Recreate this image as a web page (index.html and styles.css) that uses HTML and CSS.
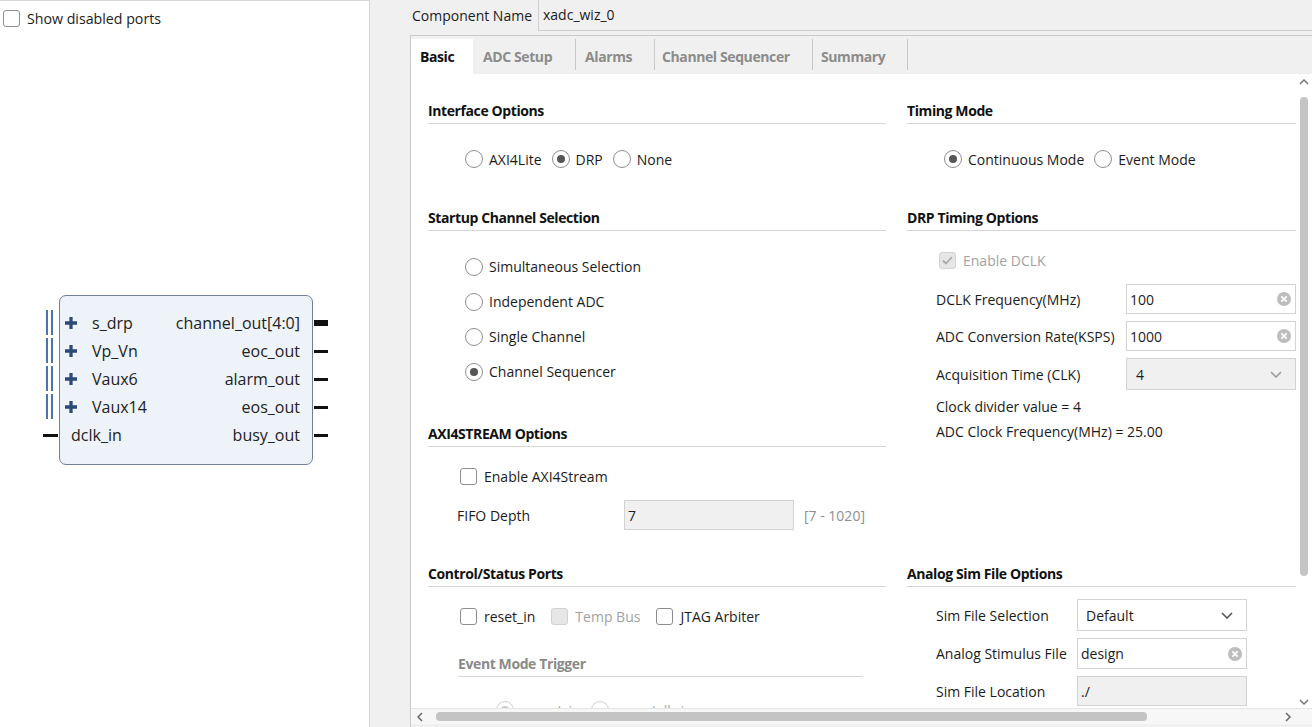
FILE: index.html
```html
<!DOCTYPE html>
<html>
<head>
<meta charset="utf-8">
<title>XADC Wizard</title>
<link rel="stylesheet" href="styles.css">
</head>
<body>
<div class="app">
  <aside class="left">
    <div class="top-cb"><span class="cb"></span><span>Show disabled ports</span></div>
    <div class="block">
      <div class="port"><span class="pin-l bus"></span><span class="pl"><svg class="plus" width="11" height="11" viewBox="0 0 11 11"><path d="M5.5 0v11M0 5.5h11" stroke="#2d4a78" stroke-width="3"/></svg>s_drp</span><span class="pr">channel_out[4:0]</span><span class="pin-r thick"></span></div>
      <div class="port"><span class="pin-l bus"></span><span class="pl"><svg class="plus" width="11" height="11" viewBox="0 0 11 11"><path d="M5.5 0v11M0 5.5h11" stroke="#2d4a78" stroke-width="3"/></svg>Vp_Vn</span><span class="pr">eoc_out</span><span class="pin-r"></span></div>
      <div class="port"><span class="pin-l bus"></span><span class="pl"><svg class="plus" width="11" height="11" viewBox="0 0 11 11"><path d="M5.5 0v11M0 5.5h11" stroke="#2d4a78" stroke-width="3"/></svg>Vaux6</span><span class="pr">alarm_out</span><span class="pin-r"></span></div>
      <div class="port"><span class="pin-l bus"></span><span class="pl"><svg class="plus" width="11" height="11" viewBox="0 0 11 11"><path d="M5.5 0v11M0 5.5h11" stroke="#2d4a78" stroke-width="3"/></svg>Vaux14</span><span class="pr">eos_out</span><span class="pin-r"></span></div>
      <div class="port"><span class="pin-l wire"></span><span class="pl plain">dclk_in</span><span class="pr">busy_out</span><span class="pin-r"></span></div>
    </div>
  </aside>

  <main class="right">
    <div class="cname">
      <span class="cname-l">Component Name</span>
      <div class="cname-in">xadc_wiz_0</div>
    </div>

    <div class="tabpanel">
      <div class="tabs">
        <div class="tab active w-basic">Basic</div>
        <div class="tab sep w-adc">ADC Setup</div>
        <div class="tab sep w-alarms">Alarms</div>
        <div class="tab sep w-chseq">Channel Sequencer</div>
        <div class="tab sep w-summary">Summary</div>
      </div>

      <div class="tbody">
        <div class="viewport">
          <div class="cols">
            <div class="col col-l">
              <div class="sh">Interface Options</div>
              <div class="radios row-first">
                <span class="opt"><span class="rd"></span>AXI4Lite</span>
                <span class="opt"><span class="rd on"></span>DRP</span>
                <span class="opt"><span class="rd"></span>None</span>
              </div>

              <div class="sh sec-gap1">Startup Channel Selection</div>
              <div class="rlist">
                <span class="opt"><span class="rd"></span>Simultaneous Selection</span>
                <span class="opt"><span class="rd"></span>Independent ADC</span>
                <span class="opt"><span class="rd"></span>Single Channel</span>
                <span class="opt"><span class="rd on"></span>Channel Sequencer</span>
              </div>

              <div class="sh sec-gap2">AXI4STREAM Options</div>
              <div class="cbrow cb-first">
                <span class="opt cbopt"><span class="cb"></span>Enable AXI4Stream</span>
              </div>
              <div class="fifo">
                <span class="fifo-l">FIFO Depth</span>
                <div class="field dis fifo-in">7</div>
                <span class="range">[7 - 1020]</span>
              </div>

              <div class="sh sec-gap3">Control/Status Ports</div>
              <div class="cbrow cb-first">
                <span class="opt cbopt"><span class="cb"></span>reset_in</span>
                <span class="opt cbopt disabled"><span class="cb dcb"></span>Temp Bus</span>
                <span class="opt cbopt"><span class="cb"></span>JTAG Arbiter</span>
              </div>
              <div class="sh sub-sh">Event Mode Trigger</div>
              <div class="radios ev-radios disabled">
                <span class="opt"><span class="rd drd on"></span>convst_in</span>
                <span class="opt"><span class="rd drd"></span>convstclk_in</span>
              </div>
            </div>

            <div class="col col-r">
              <div class="sh">Timing Mode</div>
              <div class="radios row-first">
                <span class="opt"><span class="rd on"></span>Continuous Mode</span>
                <span class="opt"><span class="rd"></span>Event Mode</span>
              </div>

              <div class="sh sec-gap1">DRP Timing Options</div>
              <div class="cbrow cb-first">
                <span class="opt cbopt disabled"><span class="cb dcb"><svg width="13" height="11" viewBox="0 0 13 11"><path d="M2 5.5l3 3 6-6.5" fill="none" stroke="#a9a9a9" stroke-width="1.8"/></svg></span>Enable DCLK</span>
              </div>
              <div class="frow drp fr-first">
                <span class="lbl">DCLK Frequency(MHz)</span>
                <div class="field">100<svg class="clr" width="14" height="14" viewBox="0 0 14 14"><circle cx="7" cy="7" r="7" fill="#bdbdbd"/><path d="M4.3 4.3l5.4 5.4M9.7 4.3l-5.4 5.4" stroke="#fff" stroke-width="1.8"/></svg></div>
              </div>
              <div class="frow drp fr-next">
                <span class="lbl">ADC Conversion Rate(KSPS)</span>
                <div class="field">1000<svg class="clr" width="14" height="14" viewBox="0 0 14 14"><circle cx="7" cy="7" r="7" fill="#bdbdbd"/><path d="M4.3 4.3l5.4 5.4M9.7 4.3l-5.4 5.4" stroke="#fff" stroke-width="1.8"/></svg></div>
              </div>
              <div class="frow drp fr-next">
                <span class="lbl">Acquisition Time (CLK)</span>
                <div class="field sel dis acq">4<svg class="chev" width="12" height="7" viewBox="0 0 12 7"><path d="M1 1l5 5 5-5" fill="none" stroke="#9a9a9a" stroke-width="1.6"/></svg></div>
              </div>
              <div class="info info-first">Clock divider value = 4</div>
              <div class="info info-next">ADC Clock Frequency(MHz) = 25.00</div>

              <div class="sh sec-gap4">Analog Sim File Options</div>
              <div class="frow sim sim-first">
                <span class="lbl">Sim File Selection</span>
                <div class="field sel simsel">Default<svg class="chev" width="12" height="7" viewBox="0 0 12 7"><path d="M1 1l5 5 5-5" fill="none" stroke="#555" stroke-width="1.6"/></svg></div>
              </div>
              <div class="frow sim fr-next">
                <span class="lbl">Analog Stimulus File</span>
                <div class="field stim">design<svg class="clr" width="14" height="14" viewBox="0 0 14 14"><circle cx="7" cy="7" r="7" fill="#bdbdbd"/><path d="M4.3 4.3l5.4 5.4M9.7 4.3l-5.4 5.4" stroke="#fff" stroke-width="1.8"/></svg></div>
              </div>
              <div class="frow sim fr-next">
                <span class="lbl">Sim File Location</span>
                <div class="field dis loc">./</div>
              </div>
            </div>
          </div>
        </div>

        <div class="vscroll">
          <svg width="10" height="6" viewBox="0 0 10 6"><path d="M1 5l4-4 4 4" fill="none" stroke="#777" stroke-width="1.5"/></svg>
          <div class="vthumb"></div>
          <svg class="vdown" width="10" height="6" viewBox="0 0 10 6"><path d="M1 1l4 4 4-4" fill="none" stroke="#777" stroke-width="1.5"/></svg>
        </div>
        <div class="hscroll">
          <svg width="6" height="10" viewBox="0 0 6 10"><path d="M5 1L1 5l4 4" fill="none" stroke="#666" stroke-width="1.5"/></svg>
          <div class="hthumb"></div>
          <svg class="hright" width="6" height="10" viewBox="0 0 6 10"><path d="M1 1l4 4-4 4" fill="none" stroke="#666" stroke-width="1.5"/></svg>
        </div>
        <div class="corner"></div>
      </div>
    </div>
  </main>
</div>
</body>
</html>
```

FILE: styles.css
```css
* { box-sizing: border-box; margin: 0; padding: 0; }
html, body { width: 1312px; height: 727px; overflow: hidden; }
body {
  font-family: "Open Sans", "Noto Sans", sans-serif;
  font-size: 14px;
  color: #1b1b1b;
  background: #f0f0f0;
}
.app { display: flex; height: 727px; }

/* ---------- left panel ---------- */
.left {
  width: 370px;
  flex: none;
  background: #fff;
  border-top: 1px solid #d8d8d8;
  border-right: 1px solid #d8d8d8;
}
.top-cb {
  display: flex;
  align-items: center;
  gap: 7px;
  height: 18px;
  margin: 8px 0 0 3px;
  font-size: 14.2px;
}
.cb {
  width: 17px;
  height: 17px;
  flex: none;
  border: 1px solid #8d8d8d;
  border-radius: 3px;
  background: #fff;
  display: flex;
  align-items: center;
  justify-content: center;
}
.cb.dcb { border-color: #d2d2d2; background: #e6e6e6; }

.block {
  width: 254px;
  height: 170px;
  margin: 268px 0 0 59px;
  padding-top: 13px;
  border: 1px solid #6f7f96;
  border-radius: 7px;
  background: #eef3f9;
  font-size: 16px;
  color: #222;
}
.port {
  position: relative;
  height: 28px;
  display: flex;
  align-items: center;
  justify-content: space-between;
}
.pl { display: flex; align-items: center; gap: 15px; padding-left: 5px; }
.plus { width: 12px; height: 12px; }
.pl.plain { padding-left: 11px; }
.pr { padding-right: 12px; }
.pin-l, .pin-r { position: absolute; }
.pin-l.bus {
  left: -14px;
  top: 1px;
  width: 7px;
  height: 25px;
  border-left: 2.5px solid #4a76ab;
  border-right: 2.5px solid #4a76ab;
}
.pin-l.wire { left: -17px; top: 13px; width: 15px; height: 3px; background: #111; }
.pin-r { right: -16px; top: 13px; width: 14px; height: 3px; background: #111; }
.pin-r.thick { top: 11px; height: 6px; }

/* ---------- right side ---------- */
.right { flex: 1; display: flex; flex-direction: column; min-width: 0; }
.cname { display: flex; height: 31px; }
.cname-l { width: 168px; padding-left: 42px; line-height: 31px; flex: none; }
.cname-in {
  flex: 1;
  border-left: 1px solid #cfcfcf;
  border-bottom: 1px solid #cfcfcf;
  padding-left: 4px;
  line-height: 30px;
}
.tabpanel {
  margin: 4px 0 0 40px;
  border-left: 1px solid #c9c9c9;
  border-top: 1px solid #c9c9c9;
  padding-bottom: 3px;
  flex: 1;
  display: flex;
  flex-direction: column;
}
.tabs { height: 38px; display: flex; align-items: flex-end; }
.tab {
  position: relative;
  height: 35px;
  line-height: 36px;
  padding-left: 9px;
  font-weight: 700;
  letter-spacing: -0.4px;
  color: #8c8c8c;
  flex: none;
}
.tab.active { background: #fff; color: #111; }
.tab.sep::after {
  content: "";
  position: absolute;
  right: 0;
  top: 0;
  bottom: 4px;
  width: 1px;
  background: #c8c8c8;
}
.w-basic { width: 62px; }
.w-adc { width: 103px; padding-left: 10px; }
.w-alarms { width: 79px; }
.w-chseq { width: 158px; padding-left: 7px; }
.w-summary { width: 95px; padding-left: 8px; }

.tbody {
  height: 650px;
  display: grid;
  grid-template-columns: minmax(0, 1fr) 16px;
  grid-template-rows: minmax(0, 1fr) 16px;
  background: #fff;
}
.viewport { overflow: hidden; background: #fff; }
.cols { display: flex; gap: 21px; padding: 26px 0 0 17px; }
.col { flex: none; display: flex; flex-direction: column; }
.col-l { width: 458px; }
.col-r { width: 389px; }

.sh {
  font-weight: 700;
  letter-spacing: -0.4px;
  line-height: 22px;
  padding-bottom: 1px;
  border-bottom: 1px solid #d6d6d6;
  color: #111;
}
.sub-sh { margin: 27px 0 0 30px; width: 405px; color: #8a8a8a; }
.sec-gap1 { margin-top: 38px; }
.sec-gap2 { margin-top: 34px; }
.sec-gap3 { margin-top: 33px; }
.sec-gap4 { margin-top: 121px; }

.opt { display: flex; align-items: center; gap: 6px; height: 20px; white-space: nowrap; }
.cbopt { gap: 7px; }
.disabled { color: #a2a2a2; }
.rd {
  width: 18px;
  height: 18px;
  flex: none;
  border: 1px solid #8f8f8f;
  border-radius: 50%;
  background: #fff;
  display: flex;
  align-items: center;
  justify-content: center;
}
.rd.on::after {
  content: "";
  width: 8px;
  height: 8px;
  border-radius: 50%;
  background: #555;
}
.rd.drd { border-color: #cfcfcf; }
.rd.drd.on::after { background: #c8c8c8; }

.radios { display: flex; gap: 10px; padding-left: 37px; }
.row-first { margin-top: 25px; }
.ev-radios { margin-top: 23px; padding-left: 68px; gap: 10px; }
.rlist { display: flex; flex-direction: column; padding-left: 37px; margin-top: 18px; }
.rlist .opt { height: 35px; }

.cbrow { display: flex; gap: 16px; padding-left: 32px; }
.cb-first { margin-top: 19px; }

.fifo { display: flex; align-items: center; margin-top: 14px; padding-left: 29px; height: 30px; }
.fifo-l { width: 167px; flex: none; }
.fifo-in { width: 171px; }
.range { margin-left: 10px; color: #8f8f8f; }

.field {
  width: 170px;
  height: 30px;
  flex: none;
  border: 1px solid #d3d3d3;
  background: #fff;
  display: flex;
  align-items: center;
  justify-content: space-between;
  padding: 0 4px 0 3px;
}
.field.dis { background: #f0f0f0; }
.field.sel { height: 32px; }
.acq { padding: 0 13px 0 9px; }
.simsel { padding: 0 13px 0 8px; }
.stim { height: 31px; }
.clr { flex: none; }

.frow { display: flex; align-items: center; padding-left: 29px; }
.frow.drp .lbl { width: 190px; flex: none; }
.frow.sim .lbl { width: 141px; flex: none; }
.fr-first { margin-top: 14px; }
.fr-next { margin-top: 7px; }
.sim-first { margin-top: 12px; }
.info { padding-left: 29px; line-height: 20px; }
.info-first { margin-top: 7px; }
.info-next { margin-top: 5px; }

/* ---------- scrollbars ---------- */
.vscroll {
  background: #fff;
  display: flex;
  flex-direction: column;
  align-items: center;
  padding: 5px 0 3px;
}
.vthumb { width: 8px; height: 479px; margin-top: 12px; border-radius: 4px; background: #c4c4c4; }
.vdown { margin-top: auto; }
.hscroll {
  background: #f7f7f7;
  border-top: 1px solid #e6e6e6;
  display: flex;
  align-items: center;
  padding: 0 5px 0 6px;
}
.hthumb { width: 711px; height: 9px; margin-left: 13px; border-radius: 4px; background: #c4c4c4; }
.hright { margin-left: auto; }
.corner { background: #f7f7f7; border-top: 1px solid #e6e6e6; }
```
